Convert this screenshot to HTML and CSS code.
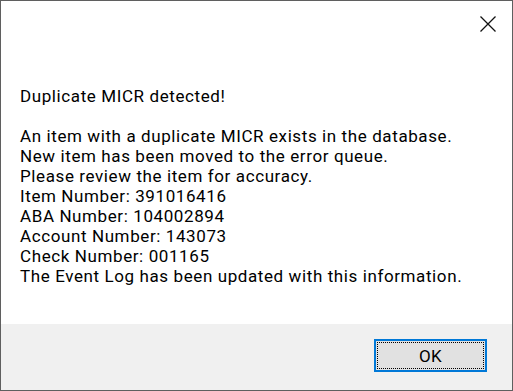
FILE: index.html
```html
<!DOCTYPE html>
<html lang="en">
<head>
    <meta charset="UTF-8">
    <title>Duplicate MICR</title>
    <link rel="stylesheet" href="styles.css">
</head>
<body>

    <div class="dialog">
        <div class="titlebar">
            <button class="close" title="Close">
                <svg width="16" height="16" viewBox="0 0 16 16">
                    <path d="M0.5 0.5 L15.5 15.5 M15.5 0.5 L0.5 15.5" stroke="#111" stroke-width="1.3" fill="none"/>
                </svg>
            </button>
        </div>

        <div class="content">
            <div class="line heading">Duplicate MICR detected!</div>
            <div class="line">An item with a duplicate MICR exists in the database.</div>
            <div class="line">New item has been moved to the error queue.</div>
            <div class="line">Please review the item for accuracy.</div>
            <div class="line">Item Number: 391016416</div>
            <div class="line">ABA Number: 104002894</div>
            <div class="line">Account Number: 143073</div>
            <div class="line">Check Number: 001165</div>
            <div class="line">The Event Log has been updated with this information.</div>
        </div>

        <div class="footer">
            <button class="ok"><span>OK</span></button>
        </div>
    </div>

</body>
</html>
```

FILE: styles.css
```css
body {
    margin: 0;
    font-family: Roboto, "Noto Sans", sans-serif;
    background-color: #fff;
}

.dialog {
    width: 513px;
    height: 391px;
    box-sizing: border-box;
    border: 1px solid #5f5f5f;
    display: flex;
    flex-direction: column;
    background-color: #fff;
}

.titlebar {
    height: 46px;
    display: flex;
    justify-content: flex-end;
    align-items: flex-start;
}

.close {
    margin: 15px 16px 0 0;
    padding: 0;
    border: none;
    background: none;
    width: 16px;
    height: 16px;
    display: flex;
}

.content {
    padding: 39px 0 0 19px;
    font-size: 17px;
    letter-spacing: 0.6px;
    color: #000;
}

.line {
    height: 20px;
    line-height: 20px;
    white-space: nowrap;
}

.heading {
    margin-bottom: 20px;
}

.footer {
    margin-top: auto;
    height: 66px;
    background-color: #f0f0f0;
    display: flex;
    justify-content: flex-end;
    align-items: flex-start;
    padding: 15px 25px 0 0;
    box-sizing: border-box;
}

.ok {
    width: 113px;
    height: 33px;
    padding: 1px;
    border: 2px solid #0078d7;
    background-color: #e1e1e1;
    font-family: inherit;
    font-size: 17px;
    letter-spacing: 0.3px;
    color: #000;
    display: flex;
}

.ok span {
    flex: 1;
    border: 1px dotted #000;
    display: flex;
    align-items: center;
    justify-content: center;
}
```
